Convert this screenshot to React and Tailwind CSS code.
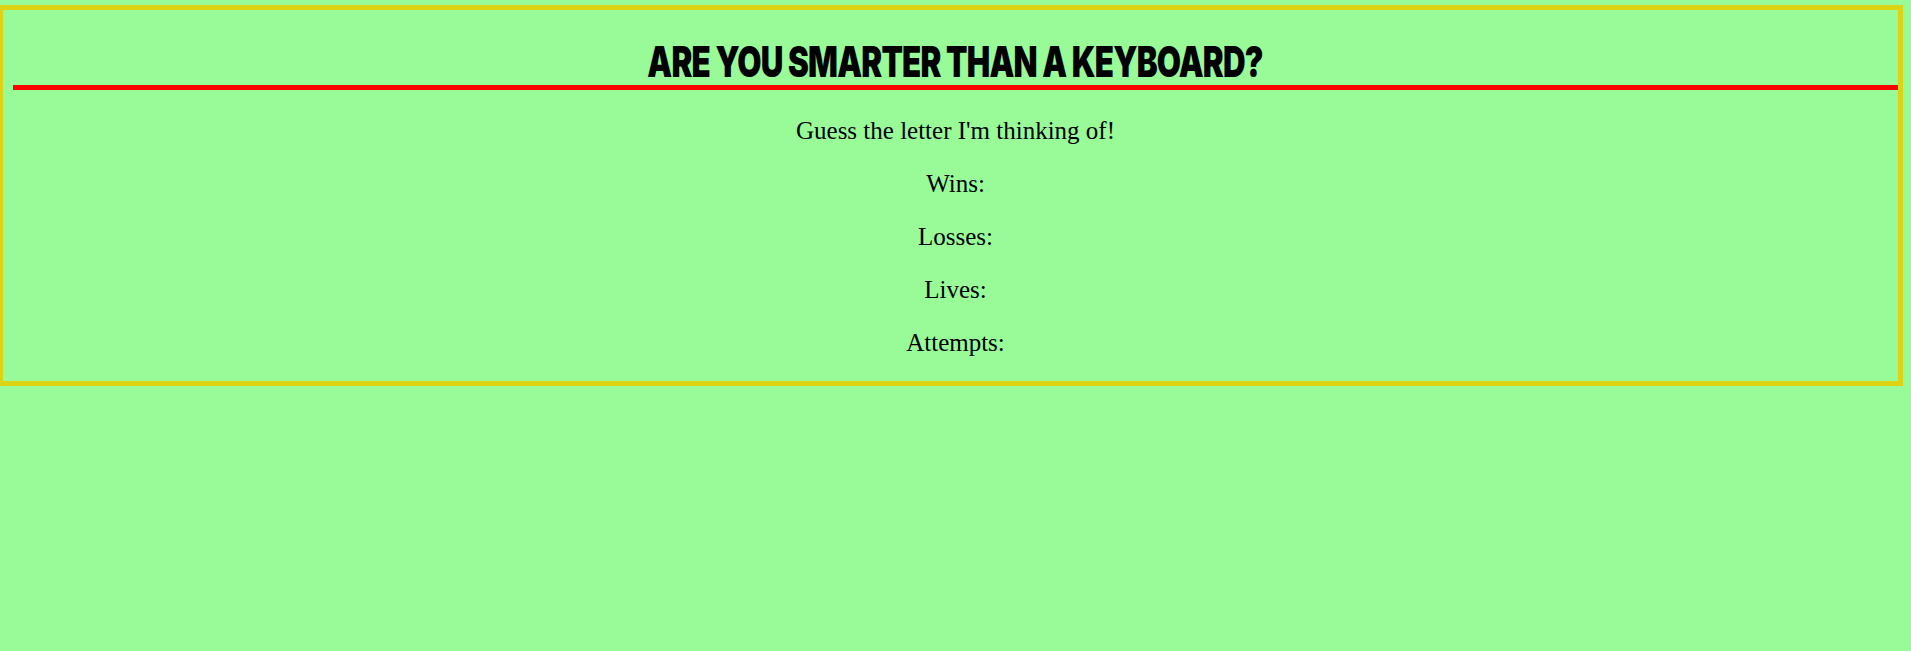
const stats = ['Wins:', 'Losses:', 'Lives:', 'Attempts:']

const App = () => {
    return (
        <div className="min-h-screen bg-[#98fb98] pt-[5px] text-black">
            {/* Game box */}
            <div className="ml-[-2px] w-[1905px] border-[5px] border-[#dcd314] pb-[24px] pl-[10px]">
                <h1 className="mt-[31px] border-b-[5px] border-[#ff0000] pb-[2px] text-center text-[42px] leading-[42px] font-black font-['Inter',sans-serif]">
                    <span className="inline-block origin-center scale-x-[0.745] tracking-tight">
                        ARE YOU SMARTER THAN A KEYBOARD?
                    </span>
                </h1>
                <div className="mt-[26px] flex flex-col gap-[24px] text-center font-['Liberation_Serif',serif] text-[25px] leading-[29px]">
                    <p>Guess the letter I'm thinking of!</p>
                    {stats.map((s) => (
                        <p key={s}>{s}</p>
                    ))}
                </div>
            </div>
        </div>
    )
}

export default App
